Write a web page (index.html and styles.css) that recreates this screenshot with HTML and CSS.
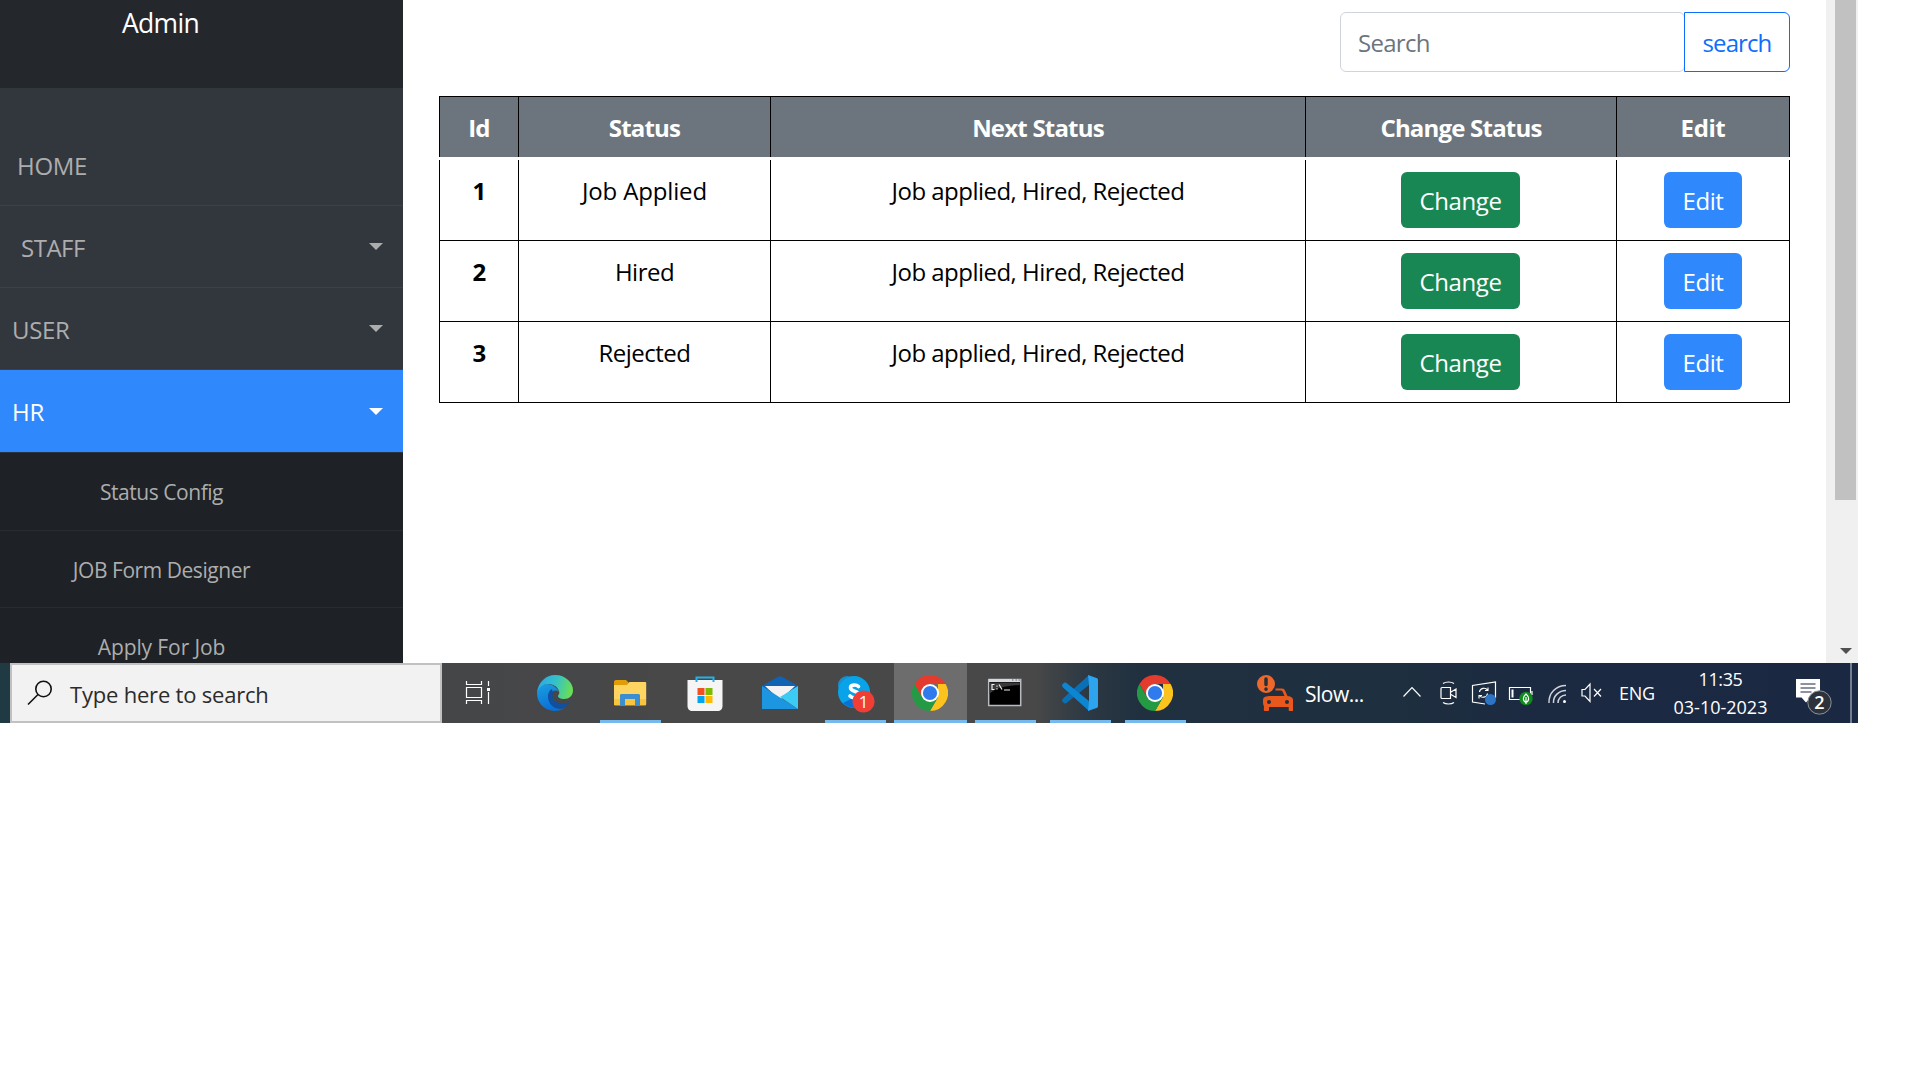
FILE: index.html
```
<!DOCTYPE html>
<html lang="en">
<head>
<meta charset="utf-8">
<title>Status Config</title>
<link rel="stylesheet" href="styles.css">
</head>
<body>
<div class="desktop">
  <div class="browser">
    <aside class="sidebar">
      <div class="profile">Admin</div>
      <nav class="menu">
        <a class="item home">HOME</a>
        <a class="item staff">STAFF<span class="caret"></span></a>
        <a class="item">USER<span class="caret"></span></a>
        <a class="item active">HR<span class="caret"></span></a>
        <a class="sub first">Status Config</a>
        <a class="sub">JOB Form Designer</a>
        <a class="sub apply">Apply For Job</a>
      </nav>
    </aside>
    <main class="main">
      <form class="search">
        <input class="search-input" type="text" placeholder="Search">
        <button class="search-btn" type="button">search</button>
      </form>
      <table class="grid">
        <colgroup><col class="c-id"><col class="c-status"><col class="c-next"><col class="c-change"><col class="c-edit"></colgroup>
        <thead>
          <tr><th>Id</th><th>Status</th><th>Next Status</th><th>Change Status</th><th class="th-edit">Edit</th></tr>
        </thead>
        <tbody>
          <tr class="spacer"><td colspan="5"></td></tr>
          <tr><td class="id">1</td><td class="wide">Job Applied</td><td>Job applied, Hired, Rejected</td><td class="act"><button class="btn green">Change</button></td><td class="act"><button class="btn blue">Edit</button></td></tr>
          <tr><td class="id">2</td><td>Hired</td><td>Job applied, Hired, Rejected</td><td class="act"><button class="btn green">Change</button></td><td class="act"><button class="btn blue">Edit</button></td></tr>
          <tr><td class="id">3</td><td>Rejected</td><td>Job applied, Hired, Rejected</td><td class="act"><button class="btn green">Change</button></td><td class="act"><button class="btn blue">Edit</button></td></tr>
        </tbody>
      </table>
    </main>
    <div class="scrollbar"><div class="thumb"></div><div class="arrow"></div></div>
  </div>

  <footer class="taskbar">
    <div class="find">
      <svg width="26" height="26" viewBox="0 0 26 26" fill="none" stroke="#111" stroke-width="1.6"><circle cx="16.500" cy="9" r="7.700"/><path d="M11 14.500 1 24.500"/></svg>
      <span>Type here to search</span>
    </div>
    <div class="apps">
      <div class="app task-view"><svg width="36" height="36" viewBox="0 0 36 36" fill="none" stroke="#fff" stroke-width="1.200"><path d="M6.500 6v3.500h15V6M6.500 29v-3.500h15V29M6.500 12.500h15v10h-15zM28.500 6v5M28.500 17v12"/><path fill="#fff" stroke="none" d="M27 13h3v3h-3z"/></svg></div>
      <div class="app"><svg width="36" height="36" viewBox="0 0 36 36">
        <defs>
          <linearGradient id="e1" x1="0" y1="0.300" x2="1" y2="0.500"><stop offset="0" stop-color="#2aa9e8"/><stop offset="0.500" stop-color="#35c1c8"/><stop offset="1" stop-color="#6be052"/></linearGradient>
          <linearGradient id="e2" x1="0" y1="0" x2="0.400" y2="1"><stop offset="0" stop-color="#1b9fe0"/><stop offset="1" stop-color="#0a6fd6"/></linearGradient>
        </defs>
        <path fill="url(#e2)" d="M0 18C1 12 5 9 10 9c6 0 10 4 12 8-4-3-8-1-8 4 0 7 7 13 14 11-3 3-7 4-11 4C7 35 0 28 0 18z"/>
        <path fill="#124f9c" d="M15 14c-7 3-5 20 9 20 4-1 7-4 9-7-1 0-3 1.500-7 1.500-7 0-12-4-10-10.500z"/>
        <path fill="url(#e1)" d="M0 18C1 7 9 0 18 0c11 0 18 8 18 15 0 6-4 9-9 9-3 0-6-1-6-3 0-1 2-2 1-5C20 11 16 9 11 9 6 9 2 12 0 18z"/>
      </svg></div>
      <div class="app open"><svg width="36" height="36" viewBox="0 0 36 36"><path fill="#e09d05" d="M2 7c0-1.200.8-2 2-2h10l3 3v5H2z"/><path fill="#fdd560" d="M2 10h13l2.500-3H33c.8 0 1.200.5 1.200 1.300V29c0 .8-.4 1.300-1.200 1.300H3.300C2.500 30.300 2 29.800 2 29z"/><path fill="#f8c53c" d="M2 24h32v5.500c0 .5-.5.800-1 .8H3c-.6 0-1-.3-1-.8z"/><path fill="#3b8fd0" d="M9.500 19h17c.9 0 1.500.6 1.500 1.500V31h-5v-7H13v7H8V20.500c0-.9.600-1.500 1.500-1.500z"/></svg></div>
      <div class="app"><svg width="36" height="36" viewBox="0 0 36 36"><path d="M9.500 7V2.500h17V7" fill="none" stroke="#22b1e8" stroke-width="2"/><path fill="#f5f5f5" d="M.5 5h35v26c0 3-2 5-5 5h-25c-3 0-5-2-5-5z"/><path fill="#22b1e8" d="M8.500 5h2v2h-2zM25.500 5h2v2h-2z"/><path fill="#f25022" d="M10.500 13h7v7h-7z"/><path fill="#7fba00" d="M18.500 13h7v7h-7z"/><path fill="#00a4ef" d="M10.500 21h7v7h-7z"/><path fill="#ffb900" d="M18.500 21h7v7h-7z"/></svg></div>
      <div class="app"><svg width="36" height="36" viewBox="0 0 36 36"><path fill="#0f62b4" d="M0 11 16 1.800q2-1 4 0L36 11v4H0z"/><path fill="#f3f3f5" d="M3 11h30L18 25z"/><path fill="#1c96e0" d="M0 11l36 23H0z"/><path fill="#3ccbf4" d="M36 11v23L18 22z"/></svg></div>
      <div class="app open"><svg width="40" height="40" viewBox="0 0 40 40"><circle cx="12" cy="12" r="9" fill="#1a8ec9"/><circle cx="19" cy="19" r="16" fill="#08a3e8"/><path d="M8 30a16 16 0 0 0 26-5l-12-2z" fill="#0a6fd6"/><path d="M23.500 13.500c-2-2-8-2.200-8 1.300 0 4.300 8.500 2.400 8.500 7 0 3.700-6.500 3.800-9 1.200" fill="none" stroke="#fff" stroke-width="3.600" stroke-linecap="round"/><circle cx="28.500" cy="28.500" r="11" fill="#f03e34"/><text class="skype-count" x="28.500" y="34.500" text-anchor="middle">1</text></svg></div>
      <div class="app open current"><svg width="36" height="36" viewBox="0 0 36 36"><path fill="#e33b2e" d="M2.400 9A18 18 0 0 1 33.600 9H18l-7.800 13.500z"/><path fill="#fcc31e" d="M33.600 9A18 18 0 0 1 18 36l7.800-13.500L26 9z"/><path fill="#249a45" d="M2.400 9A18 18 0 0 0 18 36l7.800-13.500H10.200z"/><circle cx="18" cy="18" r="9" fill="#fff"/><circle cx="18" cy="18" r="7.100" fill="#2f7bed"/></svg></div>
      <div class="app open"><svg width="36" height="36" viewBox="0 0 36 36"><path fill="#000" stroke="#b8bcc0" stroke-width="1.500" d="M1.700 4.500h32v26h-32z"/><path fill="#d5d9dd" d="M2 4h31v3H2z"/><path stroke="#667" stroke-width="1.200" d="M25 5h1.500M28.500 5H30M31.500 5H33"/><path fill="#3a3a3a" d="M2.500 7.500h30.200V10C18 11 8 13 2.500 19z"/><path fill="none" stroke="#eee" stroke-width="1.200" d="M7.500 9.500H5v5h2.500M10 10.500v1.200M10 13.300v1.200M12 9.500l3 5M17 15h6"/></svg></div>
      <div class="app open"><svg width="36" height="36" viewBox="0 0 36 36"><path fill="#0a6fb5" d="M0 25.500c0 .6.300 1 .7 1.400l1.600 1.300c.6.500 1.300.4 1.900 0L27 10V0L1 23.500c-.6.600-1 1.200-1 2z"/><path fill="#0d85d0" d="M0 10.500c0-.6.300-1 .7-1.400l1.600-1.300c.6-.5 1.300-.4 1.900 0L27 26v10L1 12.500c-.6-.6-1-1.200-1-2z"/><path fill="#2ea4ef" d="M26 0l8.500 3c1 .4 1.500 1 1.500 2v26c0 1-.5 1.600-1.500 2L26 36l1-9.500v-17z"/></svg></div>
      <div class="app open"><svg width="36" height="36" viewBox="0 0 36 36"><path fill="#e33b2e" d="M2.400 9A18 18 0 0 1 33.600 9H18l-7.800 13.500z"/><path fill="#fcc31e" d="M33.600 9A18 18 0 0 1 18 36l7.800-13.500L26 9z"/><path fill="#249a45" d="M2.400 9A18 18 0 0 0 18 36l7.800-13.500H10.200z"/><circle cx="18" cy="18" r="9" fill="#fff"/><circle cx="18" cy="18" r="7.100" fill="#2f7bed"/></svg></div>
    </div>
    <div class="weather">
      <svg width="36" height="36" viewBox="0 0 36 36"><circle cx="9" cy="9" r="9" fill="#ee682b"/><path stroke="#25303a" stroke-width="3.500" stroke-linecap="round" d="M9 4v5.500M9 14v.2"/><path fill="#e8571c" d="M6 25c0-2 1.500-3.500 3.500-3.500L12 21h15.500l-2-4.500c-.4-.7-.8-1-1.500-1h-5.500v-2H25c1.500 0 2.500.8 3 2l2.500 5.500c3 .2 5.500 1.500 5.500 4V35.500c0 .5-.4.500-.6.500h-3c-.5 0-.7-.3-.7-.8V32H12v3.200c0 .5-.3.800-.8.800h-3.500c-.5 0-.8-.3-.8-.8V31C6 30 6 28 6 25z"/><circle cx="12" cy="27" r="2" fill="#1e2f3f"/><circle cx="30" cy="27" r="2" fill="#1e2f3f"/></svg>
      <span>Slow...</span>
    </div>
    <div class="tray">
      <svg width="200" height="36" viewBox="0 0 200 36" fill="none" stroke="#fff" stroke-width="1.200">
        <path d="M.5 21.500 9 12.500 17.500 21.500"/>
        <path d="M39 12.500h8.500v11H39c-.8 0-1-.5-1-1v-9c0-.6.300-1 1-1zM48 17l5-3v8.500L48 19.500M40 8.500c3-2 8-2 11 0M40 27.500c3 2 8 2 11 0"/>
        <path d="M82 29 69.500 27V10.500L92.500 7v16"/>
        <path stroke-width="1.100" d="M76.500 17c.5-4 6-5 8-2M85 12.500V15.500h-3M84.500 18.500c-.5 4-6 5-8 2M76 23.500v-3h3"/>
        <circle cx="87.500" cy="24.500" r="5.500" fill="#2d74c4" stroke="none"/>
        <path d="M117 24.500h-10.500v-12h21v6M129 16v4"/><path stroke-width="2" d="M109.500 14.500v8"/>
        <circle cx="123" cy="23.500" r="6.700" fill="#108a1c" stroke="none"/><path d="M123 19c-3.500 3-3.500 7 0 8.500 3.500-1.500 3.500-5.500 0-8.500zM123 22v7"/>
        <g stroke="#cfd3da" stroke-width="1.500"><path d="M146 28C145.500 18 153 10.500 163 10.500M150.500 28c-.5-7 5.500-12.500 12.500-12.500M155 28c0-4.500 3.500-8 8-8"/></g><circle cx="161.500" cy="26.500" r="1.500" fill="#fff" stroke="none"/>
        <path d="M179 14.500h3l5-5.500v17.500l-5-5.500h-3zM191 14l7 7.500M198 14l-7 7.500"/>
      </svg>
      <span class="lang">ENG</span>
      <div class="clock"><span class="time">11:35</span><span>03-10-2023</span></div>
      <svg class="notes" width="38" height="40" viewBox="0 0 38 40"><path fill="#fff" d="M1 3h24v18.500H15.500L11 26.500l-4.500-5H1z"/><path stroke="#1b2941" stroke-width="1.200" d="M5.500 8h15M5.500 12h15M5.500 16h11"/><circle cx="24.500" cy="26.500" r="11.700" fill="#2d333b" stroke="#8d9299"/><text class="note-count" x="24.500" y="32.500" text-anchor="middle">2</text></svg>
      <div class="peek"></div>
    </div>
  </footer>
</div>
</body>
</html>
```
FILE: styles.css
```
* { box-sizing: border-box; }

body {
  margin: 0;
  background: #fff;
  font-family: "Open Sans", "Noto Sans", sans-serif;
  font-size: 24px;
  line-height: 36px;
  color: #000;
}

button, input { font: inherit; }

.desktop { width: 1858px; height: 723px; overflow: hidden; }
.browser { display: flex; height: 663px; overflow: hidden; }

/* Sidebar */
.sidebar { width: 403px; height: 663px; overflow: hidden; background: #32373e; color: #adadad; }
.profile {
  height: 88px;
  padding: 5px 82px 0 0;
  background: #24272b;
  color: #fff;
  font-size: 26.5px;
  letter-spacing: -0.7px;
  text-align: center;
}
.menu { display: flex; flex-direction: column; padding-top: 36px; }
.item {
  display: flex;
  align-items: center;
  justify-content: space-between;
  height: 82px;
  padding: 2px 20px 0 12px;
  border-bottom: 1px solid #3c4148;
  letter-spacing: -0.3px;
  flex: none;
}
.home { padding-left: 17px; }
.staff { padding-left: 21px; letter-spacing: -0.5px; }
.caret {
  border: 7px solid transparent;
  border-top-color: currentColor;
  border-bottom: 0;
  margin-bottom: 2px;
}
.active { height: 83px; background: #2f89fc; color: #fff; border-color: #283442; }
.sub {
  flex: none;
  height: 77px;
  padding-right: 80px;
  border-bottom: 1px solid #282c31;
  background: #1e2125;
  font-size: 21px;
  line-height: 78px;
  letter-spacing: -0.45px;
  text-align: center;
}
.first { height: 78px; line-height: 79px; }
.apply { line-height: 79px; letter-spacing: -0.1px; }

/* Content */
.main { flex: 1; padding: 12px 36px 0; }
.search { display: flex; justify-content: flex-end; height: 60px; margin-bottom: 24px; letter-spacing: -0.7px; }
.search-input {
  width: 345px;
  padding: 2px 17px 0;
  border: 1px solid #ced4da;
  border-radius: 6px;
  background: #fff;
  letter-spacing: inherit;
}
.search-input::placeholder { color: #6c757d; opacity: 1; }
.search-btn {
  width: 106px;
  margin-left: -1px;
  padding: 2px 0 0;
  border: 1px solid #0d6efd;
  border-radius: 0 6px 6px 0;
  background: #fff;
  color: #0d6efd;
  letter-spacing: -0.9px;
}
.grid { width: 1351px; table-layout: fixed; border-spacing: 0; text-align: center; }
.c-id { width: 80px; }
.c-status { width: 252px; }
.c-next { width: 535px; }
.c-change { width: 311px; }
.c-edit { width: 173px; }
.grid th {
  height: 61px;
  padding: 2px 0 0;
  border: 1px solid #000;
  border-width: 1px 1px 0 0;
  background: #6c757d;
  color: #fff;
  letter-spacing: -0.8px;
}
.grid .th-edit { letter-spacing: -0.4px; }
.grid td {
  height: 81px;
  padding: 13px 0 0;
  border: 1px solid #000;
  border-width: 0 1px 1px 0;
  vertical-align: top;
  letter-spacing: -0.52px;
}
.grid th:first-child, .grid td:first-child { border-left-width: 1px; }
.grid .spacer td { height: 3px; padding: 0; border: 0; line-height: 0; }
.grid .id { font-weight: 700; }
.grid .wide { letter-spacing: -0.15px; }
.grid .act { padding-top: 12px; line-height: 0; }
.btn {
  height: 56px;
  padding: 1px 0 0;
  border: 0;
  border-radius: 6px;
  color: #fff;
  line-height: 36px;
  letter-spacing: -0.4px;
}
.green { width: 119px; margin-right: 1px; background: #198754; }
.blue { width: 78px; background: #2f89fc; }

.scrollbar {
  display: flex;
  flex-direction: column;
  justify-content: space-between;
  width: 32px;
  padding: 0 2px 9px 9px;
  background: #f0f0f0;
}
.thumb { height: 500px; background: #c1c1c1; }
.arrow { align-self: center; border: 6px solid transparent; border-top-color: #505050; border-bottom: 0; }

/* Taskbar */
.taskbar {
  display: flex;
  height: 60px;
  background: linear-gradient(90deg, #203a43 0, #203a43 10px, #454648 442px, #484848 700px, #484848 1035px, #2d3943 1085px, #20303f 1140px, #1e2f3f 1390px, #1b2941 1560px, #1b2843 100%);
  color: #fff;
}
.find {
  display: flex;
  align-items: center;
  gap: 17px;
  width: 432px;
  height: 60px;
  margin-left: 10px;
  padding: 2px 0 0 15px;
  border: 2px solid #c1c1c1;
  background: #f2f2f2;
  color: #2b2b2b;
  font-size: 22px;
  letter-spacing: -0.2px;
}
.find svg { margin-bottom: 3px; }
.apps { display: flex; }
.app { display: flex; align-items: center; justify-content: center; width: 75px; height: 60px; }
.task-view { width: 76px; padding-right: 5px; }
.app:not(.task-view) { padding-right: 1px; }
.open { background: linear-gradient(#76b9ed, #76b9ed) center bottom / 61px 3px no-repeat; }
.current { width: 73px; margin: 0 1px; background: linear-gradient(#76b9ed, #76b9ed) center bottom / 73px 3px no-repeat #6d6d6d; }
.skype-count { font-size: 17px; fill: #fff; }
.weather {
  display: flex;
  align-items: center;
  gap: 12px;
  width: 146px;
  margin-left: 64px;
  padding-top: 1px;
  font-size: 21px;
  letter-spacing: -0.5px;
}
.weather svg { margin-bottom: 1px; }
.tray { display: flex; align-items: center; flex: 1; font-size: 18px; }
.lang { width: 53px; margin-left: 16px; letter-spacing: -0.3px; }
.clock { display: flex; flex-direction: column; width: 97px; line-height: 28px; text-align: center; }
.time { letter-spacing: -0.4px; }
.notes { margin: 5px 0 0 26px; }
.note-count { font-size: 18px; font-weight: 600; fill: #fff; }
.peek { width: 2px; height: 60px; margin-left: auto; margin-right: 6px; background: #747d8c; }
```
